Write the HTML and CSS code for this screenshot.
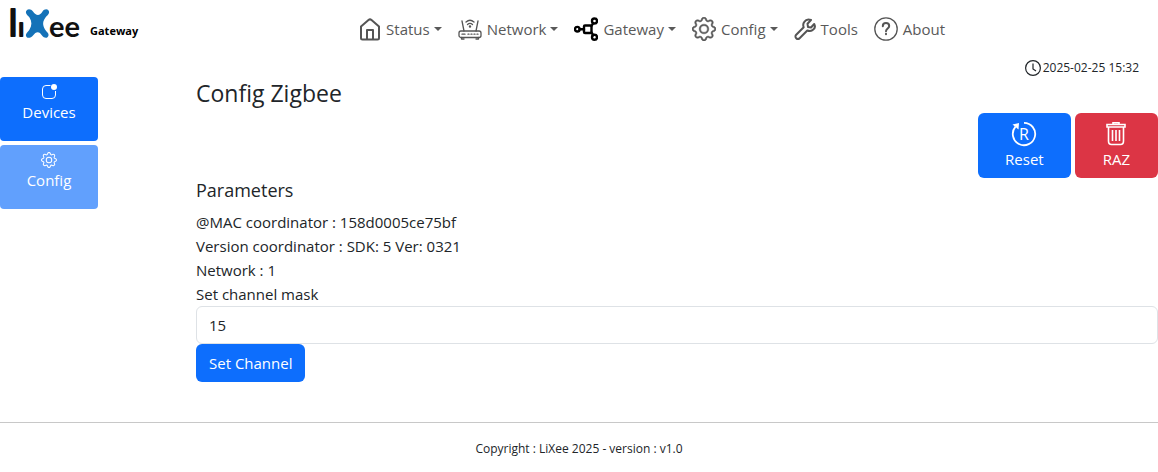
FILE: index.html
```html
<!DOCTYPE html>
<html lang="en">
<head>
<meta charset="utf-8">
<title>LiXee Gateway - Config Zigbee</title>
<meta name="viewport" content="width=device-width, initial-scale=1">
<link rel="stylesheet" href="styles.css">
</head>
<body>
<header class="navbar">
  <a class="brand" href="#">
    <svg class="logo" width="76" height="38" viewBox="0 -4 76 38" role="img" aria-label="LiXee">
      <g class="logo-text">
        <text x="0" y="28" font-size="36">l</text>
        <text x="9" y="28" font-size="23">ı</text>
        <text class="round" x="40" y="29" font-size="29">ee</text>
      </g>
      <path fill="#1472b8" d="M17 3.500C18.500 0 22 1 24 3.500C27 8 31 8 33.500 3.500C35 1 39 0 40 3.500C40.500 6 38 7.500 36.500 9.500C33.500 13.500 33.500 17 36 21.500C37.500 24 40 25 39.500 27.500C38.500 31 35 30 33 27.500C30.500 23 27 23 24 27.500C22 30 18 31 17 28C16.500 25.500 19 24 20.500 21.500C23 17.500 23 13.500 20.500 9.500C19 7.500 16.500 6 17 3.500Z"/>
    </svg>
    <span>Gateway</span>
  </a>
  <nav class="menu">
    <a href="#"><svg width="22" height="24" viewBox="0 0 22 24" class="line"><path d="M2 9.500L9.500 3Q11 1.800 12.500 3L20 9.500V21Q20 22.500 18.500 22.500H3.500Q2 22.500 2 21ZM8 22V13H14V22"/></svg><span>Status</span><i class="caret"></i></a>
    <a href="#"><svg width="24" height="24" viewBox="0 0 24 24" class="line thin"><rect x="1" y="14" width="22" height="6.500" rx="2"/><path d="M6 14L4 4M18 14L20 4M3.500 20.500V22H6M20.500 20.500V22H18M8 5Q12 1.500 16 5M9.500 7.500Q12 5.200 14.500 7.500M4 17.200H7M10 17.200H11M13 17.200H14M16 17.200H17M19 17.200H20"/><circle cx="12" cy="9.500" r=".6"/></svg><span>Network</span><i class="caret"></i></a>
    <a href="#"><svg width="24" height="24" viewBox="0 0 24 24" class="line dark"><rect x="10" y="8.500" width="7.500" height="7.500" rx="1"/><circle cx="3.300" cy="12.200" r="2.300"/><circle cx="20.500" cy="4" r="2.500"/><circle cx="20.500" cy="20.300" r="2.500"/><path d="M5.600 12.200H10M17.500 9L19.200 6.200M17.500 15.500L19.200 18.200"/></svg><span>Gateway</span><i class="caret"></i></a>
    <a href="#"><svg width="24" height="24" viewBox="0 0 16 16" class="solid bold"><use href="#gear"/></svg><span>Config</span><i class="caret"></i></a>
    <a href="#"><svg width="22" height="24" viewBox="0 0 22 24" class="line"><path d="M14 10L17 10.500L20.200 7C21.500 9.500 20.500 12 18.500 13.200C17 14.200 15 14.200 13.300 13.500L5.600 21.200C4.600 22.200 3.200 22.200 2.200 21.200C1.200 20.200 1.200 18.800 2.200 17.800L9.700 10.300C9 8.500 9 6.500 10.300 4.800C11.800 2.700 14.500 2 17 3L13.500 6.700Z"/></svg><span>Tools</span></a>
    <a href="#"><svg width="24" height="24" viewBox="0 0 24 24" class="line thin"><circle cx="12" cy="12" r="11.200"/><path stroke-width="2" d="M8.800 9.200C8.800 5 15.200 5.200 15.200 9C15.200 11.500 12 11.500 12 14.300M12 16.800V17.200"/></svg><span>About</span></a>
  </nav>
</header>

<div class="clock">
  <svg width="16" height="16" viewBox="0 0 16 16"><circle cx="8" cy="8" r="7.400"/><path d="M8 3.500V9L11 11"/></svg>
  <time datetime="2025-02-25T15:32">2025-02-25 15:32</time>
</div>

<div class="layout">
  <aside class="side">
    <button type="button" class="btn tile"><svg width="16" height="16" viewBox="0 0 16 16"><path fill="none" stroke="#fff" d="M9.500 1.500H5A3.500 3.500 0 0 0 1.500 5V11A3.500 3.500 0 0 0 5 14.500H11A3.500 3.500 0 0 0 14.500 11V7"/><circle cx="13" cy="3" r="3" fill="#fff"/></svg><span>Devices</span></button>
    <button type="button" class="btn tile" disabled><svg width="16" height="16" viewBox="0 0 16 16" class="solid"><g id="gear"><path d="M8 4.754a3.246 3.246 0 1 0 0 6.492 3.246 3.246 0 0 0 0-6.492zM5.754 8a2.246 2.246 0 1 1 4.492 0 2.246 2.246 0 0 1-4.492 0z"/><path d="M9.796 1.343c-.527-1.790-3.065-1.790-3.592 0l-.094.319a.873.873 0 0 1-1.255.520l-.292-.160c-1.640-.892-3.433.902-2.540 2.541l.159.292a.873.873 0 0 1-.520 1.255l-.319.094c-1.790.527-1.790 3.065 0 3.592l.319.094a.873.873 0 0 1 .520 1.255l-.160.292c-.892 1.640.901 3.434 2.541 2.540l.292-.159a.873.873 0 0 1 1.255.520l.094.319c.527 1.790 3.065 1.790 3.592 0l.094-.319a.873.873 0 0 1 1.255-.520l.292.160c1.640.893 3.434-.902 2.540-2.541l-.159-.292a.873.873 0 0 1 .520-1.255l.319-.094c1.790-.527 1.790-3.065 0-3.592l-.319-.094a.873.873 0 0 1-.520-1.255l.160-.292c.893-1.640-.902-3.433-2.541-2.540l-.292.159a.873.873 0 0 1-1.255-.520l-.094-.319zm-2.633.283c.246-.835 1.428-.835 1.674 0l.094.319a1.873 1.873 0 0 0 2.693 1.115l.291-.160c.764-.415 1.600.420 1.184 1.185l-.159.292a1.873 1.873 0 0 0 1.116 2.692l.318.094c.835.246.835 1.428 0 1.674l-.319.094a1.873 1.873 0 0 0-1.115 2.693l.160.291c.415.764-.420 1.600-1.185 1.184l-.291-.159a1.873 1.873 0 0 0-2.693 1.116l-.094.318c-.246.835-1.428.835-1.674 0l-.094-.319a1.873 1.873 0 0 0-2.692-1.115l-.292.160c-.764.415-1.600-.420-1.184-1.185l.159-.291A1.873 1.873 0 0 0 1.945 8.930l-.319-.094c-.835-.246-.835-1.428 0-1.674l.319-.094A1.873 1.873 0 0 0 3.060 4.377l-.160-.292c-.415-.764.420-1.600 1.185-1.184l.292.159a1.873 1.873 0 0 0 2.692-1.115l.094-.319z"/></g></svg><span>Config</span></button>
  </aside>
  <main class="main">
    <h1>Config Zigbee</h1>
    <div class="actions">
      <button type="button" class="btn action"><svg width="26" height="26" viewBox="0 0 26 26"><path fill="none" stroke="#fff" stroke-width="1.800" d="M13 1.800A11.200 11.200 0 1 1 4.500 5.700"/><path fill="#fff" d="M1.500 3.500L8 2L7.500 8.500Z"/><text class="mark" x="13" y="19" text-anchor="middle" font-size="16" fill="#fff">R</text></svg><span>Reset</span></button>
      <button type="button" class="btn action danger"><svg width="26" height="26" viewBox="0 0 26 26"><path fill="none" stroke="#fff" stroke-width="1.600" d="M10 3V1.800H16V3M4 3.500H22V6H4ZM5.500 6V20Q5.500 23.500 8.500 23.500H17.500Q20.500 23.500 20.500 20V6M9.500 9V20M13 9V20M16.500 9V20"/></svg><span>RAZ</span></button>
    </div>
    <h2>Parameters</h2>
    <div>@MAC coordinator : 158d0005ce75bf</div>
    <div>Version coordinator : SDK: 5 Ver: 0321</div>
    <div>Network : 1</div>
    <form class="form">
      <label for="mask">Set channel mask</label>
      <input id="mask" type="text" value="15">
      <button type="button" class="btn">Set Channel</button>
    </form>
  </main>
</div>

<footer class="footer">Copyright : LiXee 2025 - version : v1.0</footer>
</body>
</html>
```
FILE: styles.css
```css
* { box-sizing: border-box; }
body {
  margin: 0;
  font: 15px/24px "Open Sans", "Noto Sans", sans-serif;
  color: #212529;
  background: #fff;
}
svg { display: block; flex: none; }
.navbar { display: flex; align-items: center; height: 58px; padding-left: 9px; }
.brand {
  display: flex;
  align-items: flex-end;
  gap: 5px;
  padding-bottom: 12px;
  color: #000;
  font-size: 11px;
  font-weight: 700;
  line-height: 14px;
  text-decoration: none;
}
.logo { overflow: visible; }
.brand span { padding-bottom: 4px; }
.logo-text {
  font-family: "Liberation Sans", sans-serif;
  font-weight: 400;
  fill: #111;
  stroke: #111;
  stroke-width: 2;
  stroke-linejoin: round;
}
.round { font-family: Lato, sans-serif; font-weight: 700; stroke-width: 0; }
.menu { flex: 1; display: flex; justify-content: center; gap: 16px; padding-left: 8px; }
.menu a { display: flex; align-items: center; color: #595959; text-decoration: none; }
.menu span { margin-left: 5px; }
.caret {
  margin-left: 4px;
  border: 4px solid transparent;
  border-top-color: currentColor;
  border-bottom: 0;
}
.line { fill: none; stroke: #555; stroke-width: 2; stroke-linecap: round; stroke-linejoin: round; }
.thin { stroke-width: 1.3; }
.dark { stroke: #000; stroke-width: 2.4; }
.solid { fill: currentColor; }
.bold { stroke: currentColor; stroke-width: .3; }
.mark { font-weight: 400; }
.clock {
  display: flex;
  justify-content: flex-end;
  align-items: center;
  gap: 2px;
  padding-right: 19px;
  height: 19px;
  font-size: 12px;
  line-height: 16px;
}
.clock svg { fill: none; stroke: #212529; stroke-width: 1.2; }
.layout { display: grid; grid-template-columns: 98px 1fr; column-gap: 98px; }
.side { display: flex; flex-direction: column; gap: 4px; }
.btn {
  padding: 7px 13px;
  border: 0;
  border-radius: 6px;
  background: #0d6efd;
  color: #fff;
  font: inherit;
}
.btn:disabled { opacity: .65; }
.tile, .action { display: flex; flex-direction: column; align-items: center; }
.tile { height: 64px; border-radius: 4px; }
.main { min-width: 0; }
h1, h2 { margin: 0; font-weight: 400; }
h1 { font-size: 23px; line-height: 32px; }
h2 { margin-bottom: 8px; font-size: 18px; line-height: 24px; }
.actions { display: flex; justify-content: flex-end; gap: 4px; margin-top: 4px; }
.action { height: 65px; padding: 8px 27px; }
.action.danger { padding: 8px 28px; background: #dc3545; }
.form { display: flex; flex-direction: column; align-items: flex-start; }
.form input {
  width: 100%;
  height: 38px;
  padding: 6px 12px;
  border: 1px solid #dee2e6;
  border-radius: 6px;
  color: inherit;
  font: inherit;
}
.footer {
  margin-top: 40px;
  padding: 16px;
  border-top: 1px solid #c8c8c8;
  text-align: center;
  font-size: 12px;
  line-height: 20px;
}
```
